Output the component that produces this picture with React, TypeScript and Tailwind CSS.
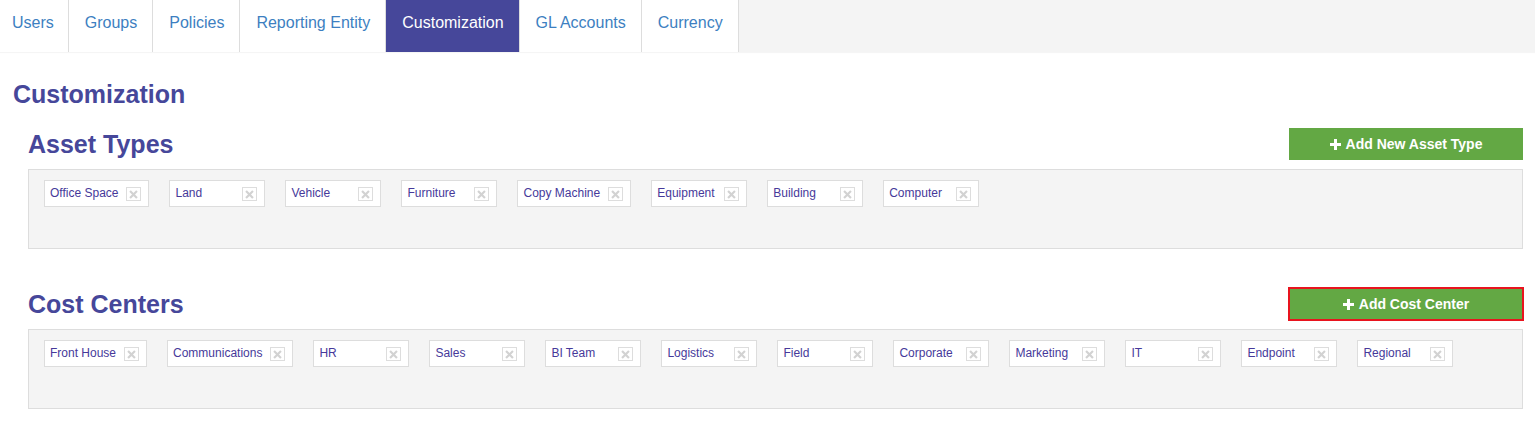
import React from 'react';

const tabs = ['Users', 'Groups', 'Policies', 'Reporting Entity', 'Customization', 'GL Accounts', 'Currency'];

const assetTypes = ['Office Space', 'Land', 'Vehicle', 'Furniture', 'Copy Machine', 'Equipment', 'Building', 'Computer'];

const costCenters = [
  'Front House',
  'Communications',
  'HR',
  'Sales',
  'BI Team',
  'Logistics',
  'Field',
  'Corporate',
  'Marketing',
  'IT',
  'Endpoint',
  'Regional',
];

const Tag: React.FC<{ label: string }> = ({ label }) => (
  <div className="h-[27px] min-w-[96px] bg-white border border-[#dddddd] flex items-start justify-between pl-[5px] pr-[7px] pt-[5px]">
    <span className="text-[12px] leading-[14px] text-[#46399a] whitespace-nowrap">{label}</span>
    {/* remove button */}
    <span className="ml-[8px] mt-[1px] w-[15px] h-[14px] border border-[#dddddd] bg-white flex items-center justify-center">
      <svg width="9" height="9" viewBox="0 0 10 10">
        <path d="M2 2 L8 8 M8 2 L2 8" stroke="#d2d2d2" strokeWidth="2.4" strokeLinecap="square" />
      </svg>
    </span>
  </div>
);

const Section: React.FC<{ title: string; button: string; items: string[]; highlight?: boolean }> = ({
  title,
  button,
  items,
  highlight,
}) => (
  <div className="pl-[28px] pr-[12px]">
    <div className="flex items-center justify-between h-[32px] mb-[9px]">
      <h2 className="text-[25px] font-bold text-[#46479a] leading-none">{title}</h2>
      <button
        className={`h-[32px] w-[234px] bg-[#63a844] text-white text-[14px] font-bold flex items-center justify-center gap-[5px] ${
          highlight ? 'outline-2 outline-[#e8141e] -outline-offset-1' : ''
        }`}
      >
        <svg width="11" height="11" viewBox="0 0 11 11">
          <path d="M4 0h3v4h4v3H7v4H4V7H0V4h4z" fill="white" />
        </svg>
        <span>{button}</span>
      </button>
    </div>
    <div className="h-[80px] bg-[#f4f4f4] border border-[#dddddd] pl-[15px] pt-[10px] flex flex-wrap gap-x-[20px] content-start">
      {items.map((it) => (
        <Tag key={it} label={it} />
      ))}
    </div>
  </div>
);

export default function App() {
  return (
    <div className="w-[1535px] h-[429px] bg-white font-['Liberation_Sans',Arial,sans-serif]">
      {/* Tab bar */}
      <div className="h-[52px] bg-[#f4f4f4] flex shadow-[0_1px_1px_rgba(0,0,0,0.04)]">
        {tabs.map((t, i) => {
          const active = t === 'Customization';
          return (
            <div
              key={t}
              className={`h-full flex items-center text-[16px] border-r border-[#dddddd] pb-[7px] ${
                i === 0 ? 'pl-[12px] pr-[14px]' : 'pl-[16px] pr-[15px]'
              } ${active ? 'bg-[#46479a] text-white' : 'bg-white text-[#3d7fc1]'}`}
            >
              {t}
            </div>
          );
        })}
      </div>

      <h1 className="pl-[13px] mt-[28px] text-[25px] font-bold text-[#46479a] leading-[28px]">Customization</h1>

      <div className="mt-[20px]">
        <Section title="Asset Types" button="Add New Asset Type" items={assetTypes} />
      </div>
      <div className="mt-[39px]">
        <Section title="Cost Centers" button="Add Cost Center" items={costCenters} highlight />
      </div>
    </div>
  );
}
